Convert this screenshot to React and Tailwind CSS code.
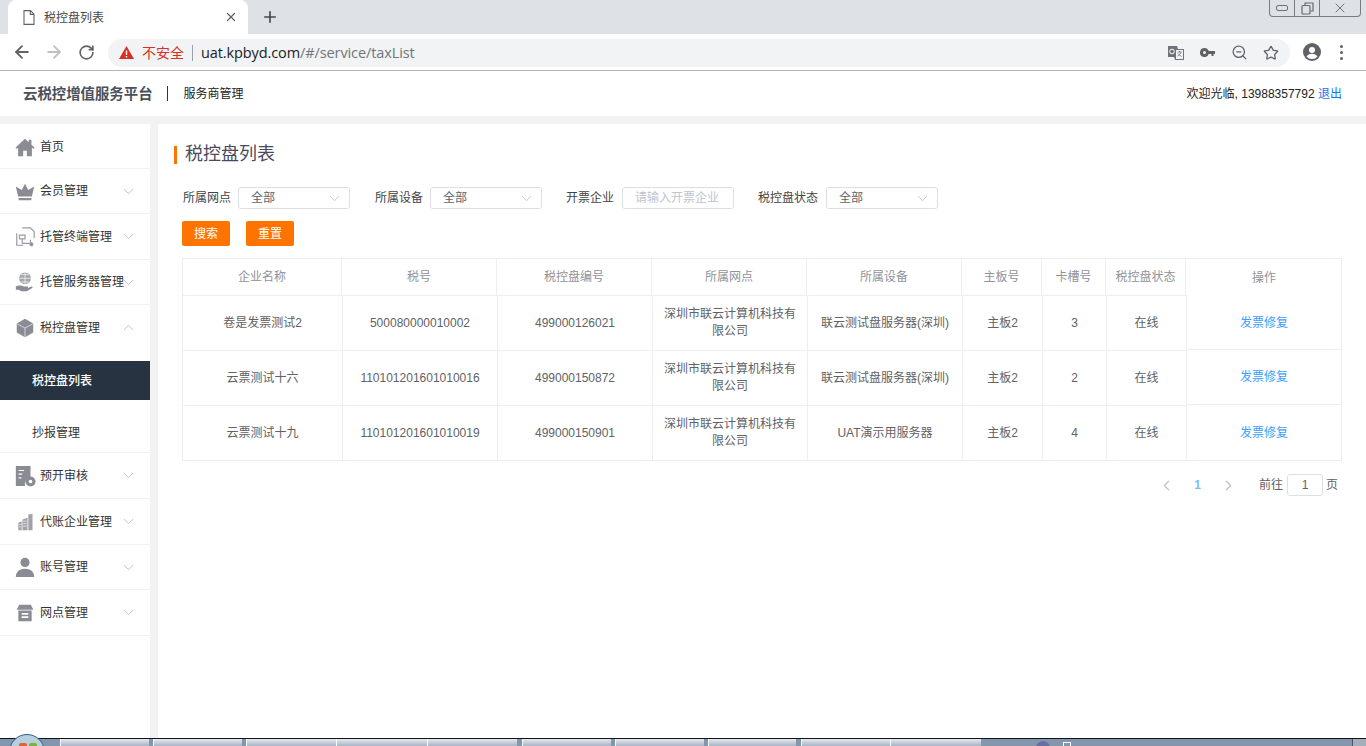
import React from "react";
import { ArrowLeft, ArrowRight, RotateCw, X, Plus, ChevronDown, ChevronUp, ChevronLeft, ChevronRight, ZoomOut, Star } from "lucide-react";

const FONT = "font-['Liberation_Sans','Noto_Sans_CJK_SC',sans-serif]";

const Ic = ({ children, size = 22, vb = "0 0 24 24" }) => (
  <svg width={size} height={size} viewBox={vb} fill="#8a8c94">{children}</svg>
);

const icons = {
  home: <Ic><path d="M12 3 1.500 12.800 3 14l1.500-1.200V22h5.500v-6h4v6h5.500v-9.200L21 14l1.500-1.200L19 9.500V4h-3v2.700Z" /></Ic>,
  crown: <Ic><path d="M12 4l3.500 7L22 7l-2.500 11h-15L2 7l6.500 4ZM5 19.500h14V22H5Z" /></Ic>,
  terminal: (
    <Ic>
      <g fill="none" stroke="#9a9ca4" strokeWidth="1.300">
        <path d="M9 2h9l4 4v7M3 8v13h7" />
        <path d="M6 10h6v4H6ZM9 14v5h8M18 15v5" />
        <circle cx="19" cy="20" r="1.600" fill="#8a8c94" />
      </g>
    </Ic>
  ),
  server: (
    <Ic>
      <circle cx="12" cy="8" r="6.500" fill="#a6a8ae" />
      <path d="M5.500 8h13M12 1.500v13M7.500 4h9M7.500 12h9" stroke="#fff" strokeWidth=".7" fill="none" />
      <path d="M2 17c4-2 6-1 9 0h4c1 1 0 2-1 2h-3 3l5-2c1.500 0 1.500 1 1 1.500L14 22H8l-3-1.500H2Z" />
    </Ic>
  ),
  box: (
    <Ic>
      <path d="M12 2 21 7v10l-9 5-9-5V7Z" />
      <path d="M3.500 7.500 12 12l8.500-4.500M12 12v10" stroke="#d8d9dc" strokeWidth="1" fill="none" />
    </Ic>
  ),
  audit: (
    <Ic>
      <path d="M2 1h16v13a7 7 0 0 0-6 9H2Z" />
      <path d="M5 6h6M5 10h4M5 14h3" stroke="#fff" strokeWidth="1.200" />
      <circle cx="18" cy="18" r="5.500" />
      <circle cx="18" cy="18" r="2" fill="#fff" />
    </Ic>
  ),
  building: (
    <Ic size={20}>
      <path d="M16 3l5-1v20h-5ZM9 9l6-2v15H9ZM4 13l4-2v11H4Z" fill="#a0a2a8" />
      <path d="M10 11h4M10 14h4M10 17h4M5 15h2M5 18h2" stroke="#fff" strokeWidth=".8" />
    </Ic>
  ),
  user: <Ic><circle cx="12" cy="7" r="5" /><path d="M2 23c0-6 4-9 10-9s10 3 10 9Z" /></Ic>,
  shop: (
    <Ic size={20}>
      <path d="M5 2h14l3 6H2ZM4 9h16v13H4Z" />
      <path d="M8 12h8v2H8ZM8 16h8v2H8Z" fill="#fff" />
    </Ic>
  ),
};

const MenuRow = ({ icon, label, open, border = true, className = "" }) => (
  <div className={`flex items-center h-[45px] relative ${border ? "border-b border-[#f2f2f2]" : ""} ${className}`}>
    <div className="w-10 flex justify-center pl-[10px] shrink-0">{icons[icon]}</div>
    <span className="text-xs text-[#333] whitespace-nowrap">{label}</span>
    {label !== "首页" && (
      <span className="absolute left-[120px] top-[14px] text-[#a9acb3]">
        {open ? <ChevronUp size={17} strokeWidth={1} /> : <ChevronDown size={17} strokeWidth={1} />}
      </span>
    )}
  </div>
);

const Select = ({ className = "" }) => (
  <div className={`w-[112px] h-[22px] border border-[#dcdfe6] rounded-[3px] flex items-center justify-between pl-3 pr-[6px] ${className}`}>
    <span className="text-xs text-[#606266]">全部</span>
    <ChevronDown size={17} strokeWidth={1} className="text-[#b4b8c0]" />
  </div>
);

const cols = ["w-[160px]", "w-[155px]", "w-[155px]", "w-[155px]", "w-[155px]", "w-[80px]", "w-[64px]", "w-[80px]"];
const headCols = ["w-[159px]", "w-[155px]", "w-[155px]", "w-[155px]", "w-[155px]", "w-[80px]", "w-[64px]", "w-[80px]"];
const headers = ["企业名称", "税号", "税控盘编号", "所属网点", "所属设备", "主板号", "卡槽号", "税控盘状态"];
const rows = [
  ["卷是发票测试2", "500080000010002", "499000126021", "深圳市联云计算机科技有限公司", "联云测试盘服务器(深圳)", "主板2", "3", "在线"],
  ["云票测试十六", "110101201601010016", "499000150872", "深圳市联云计算机科技有限公司", "联云测试盘服务器(深圳)", "主板2", "2", "在线"],
  ["云票测试十九", "110101201601010019", "499000150901", "深圳市联云计算机科技有限公司", "UAT演示用服务器", "主板2", "4", "在线"],
];
const leftRowH = ["h-[54px]", "h-[55px]", "h-[55px]"];
const rightRowH = ["h-[54px]", "h-[55px]", "h-[55px]"];

const TaskBtn = ({ className = "" }) => (
  <div className={`h-full bg-gradient-to-b from-[#e6eaef] to-[#a9b4c3] border-l border-[#f4f6f8] ${className}`} />
);

export default function App() {
  return (
    <div className={`${FONT} w-[1366px] h-[746px] overflow-hidden flex flex-col bg-white relative`}>
      {/* tab strip */}
      <div className="h-[34px] bg-[#dee1e6] flex items-end pl-2 shrink-0 relative">
        <div className="w-[240px] h-[34px] bg-white rounded-t-lg flex items-center pl-[15px] pr-[10px]">
          <svg width="12" height="15" viewBox="0 0 12 15" fill="none" stroke="#5f6368" strokeWidth="1.100">
            <path d="M1 .6h6.500L11 4.200v10.200H1ZM7.300.6v3.800H11" />
          </svg>
          <span className="ml-[9px] mt-[2px] text-xs text-[#45484d]">税控盘列表</span>
          <X size={14} strokeWidth={2.200} className="ml-auto text-[#5f6368]" />
        </div>
        <Plus size={18} strokeWidth={2.200} className="ml-[13px] mb-[8px] text-[#45484d]" />
        <div className="absolute right-[5px] top-0 w-[92px] h-[17px] border border-t-0 border-[#777c84] rounded-b-[4px] flex">
          <div className="w-[25px] border-r border-[#777c84] flex items-center justify-center">
            <div className="w-[12px] h-[6px] border border-[#6d7076] rounded-[2px]" />
          </div>
          <div className="w-[25px] border-r border-[#777c84] flex items-center justify-center">
            <svg width="13" height="13" viewBox="0 0 13 13" fill="none" stroke="#666a70" strokeWidth="1.200">
              <rect x="1" y="3.500" width="8" height="8.500" rx="1" />
              <path d="M4 3V1h8v8h-2.500" />
            </svg>
          </div>
          <div className="flex-1 flex items-center justify-center">
            <X size={16} strokeWidth={1.500} className="text-[#70747a]" />
          </div>
        </div>
      </div>
      {/* toolbar */}
      <div className="h-[37px] bg-white border-b border-[#b4b4b4] flex items-center shrink-0 relative">
        <ArrowLeft size={20} strokeWidth={2.200} className="ml-3 text-[#5f6368]" />
        <ArrowRight size={20} strokeWidth={2.200} className="ml-3 text-[#bdc1c6]" />
        <RotateCw size={17} strokeWidth={2.300} className="ml-[14px] text-[#5f6368]" />
        <div className="ml-[13px] w-[1182px] h-[28px] rounded-full bg-[#f1f3f4] flex items-center pl-[11px] pr-[11px] mt-[1px]">
          <svg width="15" height="13" viewBox="0 0 15 13">
            <path d="M7.500 0 15 13H0Z" fill="#d93025" />
            <path d="M6.800 4.500h1.400v4.500H6.800ZM6.800 10h1.400v1.400H6.800Z" fill="#fff" />
          </svg>
          <span className="ml-2 text-sm text-[#d93025] leading-none">不安全</span>
          <div className="ml-2 w-px h-[16px] bg-[#9aa0a6]" />
          <span className="ml-2 text-[14.5px] font-['Open_Sans',sans-serif] tracking-[-0.1px] whitespace-nowrap">
            <span className="text-[#202124]">uat.kpbyd.com</span>
            <span className="text-[#70757a]">/#/service/taxList</span>
          </span>
          <div className="ml-auto flex items-center">
            <svg width="16" height="16" viewBox="0 0 16 16">
              <path d="M0 1h9l1 3h6v11H7l-1-3H0Z" fill="#6e7176" />
              <path d="M7.500 4.500h8v10h-8Z" fill="#f1f3f4" stroke="#6e7176" />
              <path d="M9.500 7h4M11.500 6v1M13 7c-.5 2-2 3.500-3.500 4M10 8.500c.7 1.200 2 2.300 3.500 3" stroke="#6e7176" strokeWidth=".8" fill="none" />
              <circle cx="4" cy="6.500" r="2.300" fill="none" stroke="#fff" />
            </svg>
            <svg width="15" height="9" viewBox="0 0 15 9" className="ml-4" fill="#5f6368">
              <path fillRule="evenodd" d="M4.500 0a4.500 4.500 0 0 1 4.200 3H15v3h-1.500v2h-2V6H8.700A4.500 4.500 0 1 1 4.500 0Zm0 3a1.500 1.500 0 1 0 0 3 1.500 1.500 0 0 0 0-3Z" />
            </svg>
            <ZoomOut size={17} strokeWidth={1.800} className="ml-4 text-[#5f6368]" />
            <Star size={16} strokeWidth={1.900} className="ml-[15px] text-[#5f6368]" />
          </div>
        </div>
        <svg width="18" height="18" viewBox="0 0 18 18" className="ml-[13px]">
          <circle cx="9" cy="9" r="9" fill="#5f6368" />
          <circle cx="9" cy="7" r="3" fill="#fff" />
          <path d="M3.500 13.500c1.500-2 3.500-2.700 5.500-2.700s4 .7 5.500 2.700A7 7 0 0 1 9 16a7 7 0 0 1-5.500-2.500Z" fill="#fff" />
        </svg>
        <div className="ml-[19px] flex flex-col gap-[3px]">
          <div className="w-[3px] h-[3px] rounded-full bg-[#5f6368]" />
          <div className="w-[3px] h-[3px] rounded-full bg-[#5f6368]" />
          <div className="w-[3px] h-[3px] rounded-full bg-[#5f6368]" />
        </div>
      </div>
      {/* app header */}
      <div className="h-[45px] flex items-center pl-[23px] pr-[24px] shrink-0">
        <span className="text-[14.400px] font-bold text-[#4b5059] whitespace-nowrap leading-none mt-[2px]">云税控增值服务平台</span>
        <div className="ml-[14px] w-px h-[15px] bg-[#333]" />
        <span className="ml-4 text-xs text-[#222]">服务商管理</span>
        <span className="ml-auto text-xs text-[#222]">
          欢迎光临, 13988357792 <span className="text-[#1a73e8]">退出</span>
        </span>
      </div>
      <div className="h-2 bg-[#f2f2f2] shrink-0" />
      {/* body */}
      <div className="flex-1 flex min-h-0">
        <aside className="w-[150px] shrink-0 bg-white">
          <MenuRow icon="home" label="首页" className="pt-px" />
          <MenuRow icon="crown" label="会员管理" />
          <MenuRow icon="terminal" label="托管终端管理" className="h-[46px]" />
          <MenuRow icon="server" label="托管服务器管理" />
          <MenuRow icon="box" label="税控盘管理" open border={false} className="mb-[11px]" />
          <div className="h-[39px] bg-[#283341] flex items-center pl-8 text-xs font-medium text-white">税控盘列表</div>
          <div className="h-[53px] pt-[13px] pl-8 flex items-center text-xs text-[#333] border-b border-[#f2f2f2]">抄报管理</div>
          <MenuRow icon="audit" label="预开审核" className="h-[46px]" />
          <MenuRow icon="building" label="代账企业管理" className="h-[46px]" />
          <MenuRow icon="user" label="账号管理" />
          <MenuRow icon="shop" label="网点管理" className="h-[46px]" />
        </aside>
        <div className="w-2 bg-[#f2f2f2] shrink-0" />
        <main className="flex-1 pl-6 pr-6 min-w-0">
          <div className="mt-[22px] -ml-2 h-[18px] border-l-[3px] border-[#ff7300] pl-2 pb-[2px] flex items-center text-lg text-[#4a4a5c]">税控盘列表</div>
          <div className="mt-[23px] flex items-center h-[22px] text-xs text-[#444] pl-px">
            <span className="w-[55px] whitespace-nowrap">所属网点</span>
            <Select />
            <span className="ml-[25px] w-[55px] whitespace-nowrap">所属设备</span>
            <Select />
            <span className="ml-6 w-[56px] whitespace-nowrap">开票企业</span>
            <div className="w-[112px] h-[22px] border border-[#dcdfe6] rounded-[3px] pl-3 flex items-center text-xs text-[#c0c4cc] whitespace-nowrap">请输入开票企业</div>
            <span className="ml-6 w-[68px] whitespace-nowrap">税控盘状态</span>
            <Select />
          </div>
          <div className="mt-3 flex gap-4">
            <button className="w-12 h-[25px] bg-[#ff7300] rounded-[2px] text-white text-xs">搜索</button>
            <button className="w-12 h-[25px] bg-[#ff7300] rounded-[2px] text-white text-xs">重置</button>
          </div>
          <div className="mt-3 w-[1160px] border border-[#ebeef5] flex text-xs">
            <div className="w-[1004px] shrink-0">
              <div className="flex h-[37px] border-b border-[#ebeef5] text-[#909399]">
                {headers.map((h, i) => (
                  <div key={h} className={`${headCols[i]} shrink-0 flex items-center justify-center border-r border-[#ebeef5] whitespace-nowrap`}>{h}</div>
                ))}
              </div>
              {rows.map((r, ri) => (
                <div key={ri} className={`flex ${ri === 0 ? "h-[55px]" : ri === 1 ? "h-[55px]" : "h-[54px]"} ${ri < 2 ? "border-b border-[#ebeef5]" : ""} text-[#606266]`}>
                  {r.map((c, i) => (
                    <div key={i} className={`${cols[i]} shrink-0 flex items-center justify-center text-center border-r border-[#ebeef5] px-[10px] leading-[17px] ${i === 4 ? "px-0 whitespace-nowrap" : ""} ${i === 0 || i === 1 ? "whitespace-nowrap" : ""}`}>{c}</div>
                  ))}
                </div>
              ))}
            </div>
            <div className="flex-1 flex flex-col">
              <div className="h-[37px] flex items-center justify-center text-[#909399]">操作</div>
              {rows.map((r, ri) => (
                <div key={ri} className={`${rightRowH[ri]} flex items-center justify-center text-[#409eff] ${ri < 2 ? "border-b border-[#ebeef5]" : ""}`}>发票修复</div>
              ))}
            </div>
          </div>
          <div className="mt-[13px] w-[1160px] flex items-center justify-end h-[22px] text-xs text-[#606266] pr-1">
            <ChevronLeft size={17} strokeWidth={1.800} className="text-[#c0c4cc]" />
            <span className="ml-[19px] font-bold text-[#7dbdff]">1</span>
            <ChevronRight size={17} strokeWidth={1.800} className="ml-[19px] text-[#c0c4cc]" />
            <span className="ml-[22px]">前往</span>
            <div className="ml-1 w-[36px] h-[22px] border border-[#dcdfe6] rounded-[3px] flex items-center justify-center">1</div>
            <span className="ml-[3px]">页</span>
          </div>
        </main>
      </div>
      {/* taskbar */}
      <div className="h-2 bg-[#8496ac] border-t border-[#10151c] shrink-0 flex relative">
        <TaskBtn className="ml-[60px] w-[89px]" />
        <TaskBtn className="ml-1 w-[89px]" />
        <TaskBtn className="ml-1 w-[90px]" />
        <TaskBtn className="w-[91px]" />
        <TaskBtn className="w-[90px]" />
        <TaskBtn className="ml-[5px] w-[89px]" />
        <TaskBtn className="ml-1 w-[89px]" />
        <TaskBtn className="ml-1 w-[88px]" />
        <TaskBtn className="ml-[5px] w-[89px]" />
        <TaskBtn className="w-[91px]" />
        <div className="absolute right-0 top-0 w-[14px] h-full bg-[#a5aeb9] border-l border-[#4a5565]" />
        <div className="absolute left-[1036px] top-[2px] w-[14px] h-[14px] rounded-full bg-[#6a6f9e]" />
        <div className="absolute left-[1063px] top-[3px] w-2 h-2 border border-white" />
      </div>
      <div className="absolute left-[9px] top-[734px] w-9 h-9 rounded-full border border-[#2d5f7e] bg-[#b6d0df] overflow-hidden">
        <div className="absolute left-[9px] top-[8px] w-[8px] h-[8px] rounded-[2px] bg-[#e5622a]" />
        <div className="absolute left-[19px] top-[8px] w-[8px] h-[8px] rounded-[2px] bg-[#7bb33a]" />
      </div>
    </div>
  );
}
